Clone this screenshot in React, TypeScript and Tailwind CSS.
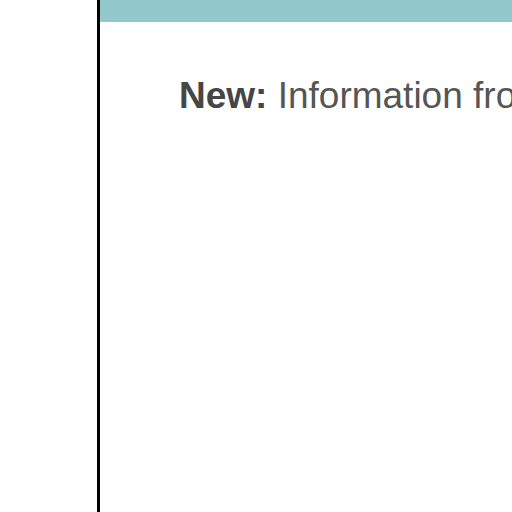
export default function App() {
  return (
    <div className="w-[512px] h-[512px] overflow-hidden bg-white flex" style={{ fontFamily: '"Liberation Sans", Arial, sans-serif' }}>
      <div className="w-[97px] shrink-0" />
      <div className="w-[3px] shrink-0 bg-black" />
      <div className="flex-1 flex flex-col min-w-0 overflow-hidden">
        <div className="h-[22px] bg-[#93c9cc]" />
        <div className="pl-[79px] pt-[52px] whitespace-nowrap text-[37px] leading-[44px] text-[#555555]">
          <span className="font-bold text-[#464646]">New:</span> Information from
        </div>
      </div>
    </div>
  );
}
